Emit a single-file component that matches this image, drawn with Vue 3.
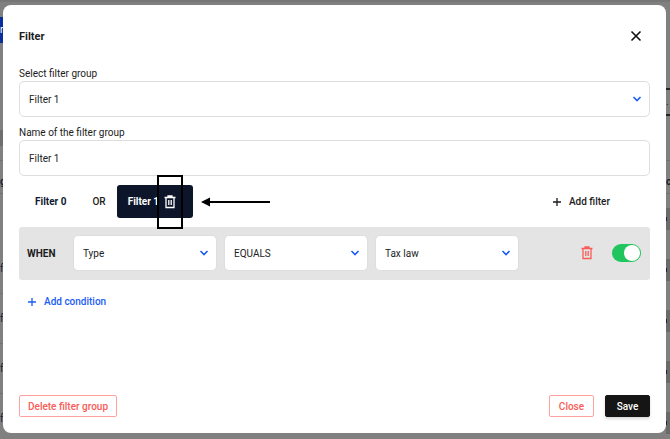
<script setup>

  import { ref, reactive } from "vue";

  const open = ref(true);
  const group = ref('Filter 1');
  const groupName = ref('Filter 1');
  const activeTab = ref(1);

  /* values of the condition row */
  const condition = reactive({
    field: 'Type',
    operator: 'EQUALS',
    value: 'Tax law',
    enabled: true
  });

  /* options for the three condition dropdowns */
  const selects = [
    {key: 'field', label: 'Field', options: ['Type', 'Name']},
    {key: 'operator', label: 'Operator', options: ['EQUALS', 'NOT EQUALS']},
    {key: 'value', label: 'Value', options: ['Tax law', 'Civil law']},
  ]

  /* text of the page that shows on the left of the dialog */
  const leftRows = ['f', 'f', 'f', 'f'];

  function closeDialog() {
    open.value = false;
  }
</script>

<template>
  <div class="screen">
    <div class="behind" aria-hidden="true">
      <div class="edge left">
        <span class="blue">r</span>
        <span class="grey-block"></span>
        <span class="head">g</span>
        <span class="cell" v-for="(row, i) in leftRows" :key="i">{{row}}</span>
      </div>
      <div class="edge right">
        <span class="outlined">.</span>
        <span class="head">c</span>
        <span class="cell" v-for="i in 5" :key="i"><b></b></span>
      </div>
    </div>

    <section v-if="open" class="dialog" role="dialog" aria-labelledby="dialogTitle">
      <header>
        <h2 id="dialogTitle">Filter</h2>
        <button class="close-icon" type="button" aria-label="Close dialog" @click="closeDialog">
          <svg width="12" height="12" viewBox="0 0 12 12"><path d="M1.5 1.5l9 9M10.5 1.5l-9 9" /></svg>
        </button>
      </header>

      <label class="field-label" for="filterGroup">Select filter group</label>
      <div class="select">
        <select id="filterGroup" v-model="group">
          <option>Filter 0</option>
          <option>Filter 1</option>
        </select>
        <svg class="chevron" width="10" height="6" viewBox="0 0 10 6"><path d="M1.5 1l3.5 3.5L8.5 1" /></svg>
      </div>

      <label class="field-label second" for="groupName">Name of the filter group</label>
      <input id="groupName" class="text" type="text" v-model="groupName" />

      <nav class="tabs">
        <button class="tab" type="button" @click="activeTab = 0">Filter 0</button>
        <span class="or">OR</span>
        <button class="tab active" type="button" @click="activeTab = 1">
          Filter 1
          <span class="marked">
            <svg class="trash" width="12" height="14" viewBox="0 0 12 14"><path d="M0.5 2.5h11M4 2V1h4v1M2 2.5v10h8v-10M4.8 5v5M7.2 5v5" /></svg>
          </span>
        </button>
        <svg class="arrow" width="69" height="10" viewBox="0 0 69 10"><path d="M8 5h61" stroke="#000" stroke-width="2" /><path d="M0 5l9-4.5v9z" /></svg>
        <button class="add add-filter" type="button">
          <svg width="10" height="10" viewBox="0 0 10 10"><path d="M5 1v8M1 5h8" /></svg>
          Add filter
        </button>
      </nav>

      <div class="condition">
        <span class="when">WHEN</span>
        <div class="select" v-for="item in selects" :key="item.key">
          <select :aria-label="item.label" v-model="condition[item.key]">
            <option v-for="option in item.options" :key="option">{{option}}</option>
          </select>
          <svg class="chevron" width="10" height="6" viewBox="0 0 10 6"><path d="M1.5 1l3.5 3.5L8.5 1" /></svg>
        </div>
        <button class="remove" type="button" aria-label="Remove condition">
          <svg class="trash" width="12" height="14" viewBox="0 0 12 14"><path d="M0.5 2.5h11M4 2V1h4v1M2 2.5v10h8v-10M4.8 5v5M7.2 5v5" /></svg>
        </button>
        <input class="toggle" type="checkbox" aria-label="Condition enabled" v-model="condition.enabled" />
      </div>

      <button class="add add-condition" type="button">
        <svg width="10" height="10" viewBox="0 0 10 10"><path d="M5 1v8M1 5h8" /></svg>
        Add condition
      </button>

      <footer>
        <button class="outline" type="button">Delete filter group</button>
        <button class="outline close" type="button" @click="closeDialog">Close</button>
        <button class="save" type="button">Save</button>
      </footer>
    </section>
  </div>
</template>

<style>
body {
  background: #808080;
}
</style>

<style scoped>

.screen {
  display: grid;
  min-height: 100vh;
  font-family: Roboto, "Liberation Sans", sans-serif;
  font-size: 10px;
  color: #1c1c1c;
  background: #808080;
}

.behind, .dialog {
  grid-area: 1 / 1;
  box-sizing: border-box;
}

/* page under the dialog */
.behind {
  display: flex;
  justify-content: space-between;
  border-top: 2px solid #767676;
  overflow: hidden;
}

.edge {
  display: flex;
  flex-direction: column;
  width: 4px;
  color: #1a2233;
}

.edge span {
  flex: none;
  box-sizing: border-box;
}

.left .blue {
  height: 26px;
  margin-top: 15px;
  line-height: 26px;
  background: #0a2f9c;
  color: #ffffff;
}

.left .grey-block {
  height: 16px;
  margin-top: 87px;
  background: #6e6e6e;
}

.edge .head {
  height: 34px;
  line-height: 42px;
  font-weight: 700;
  border-top: 1px solid #727272;
  border-bottom: 1px solid #727272;
}

.left .head {
  margin-top: 14px;
}

.left .cell {
  height: 50px;
  line-height: 50px;
  border-bottom: 1px solid #727272;
}

.left .head + .cell {
  margin-top: 50px;
}

.left .cell:last-child {
  height: 40px;
  border: 0;
}

.right .outlined {
  height: 28px;
  margin-top: 86px;
  line-height: 24px;
  border-top: 2px solid #222222;
  border-bottom: 2px solid #222222;
}

.right .head {
  margin-top: 44px;
}

.right .cell {
  display: flex;
  align-items: center;
  height: 22px;
  margin-top: 14px;
  margin-bottom: 15px;
  background: #6a6a6a;
}

.right .cell:last-child {
  margin-bottom: 0;
}

.right .cell b {
  width: 1px;
  height: 4px;
  background: #1a2233;
}

.dialog {
  display: flex;
  flex-direction: column;
  z-index: 1;
  margin: 5px 4px 6px 3px;
  padding: 16px;
  background: #ffffff;
  border-radius: 8px;
}

button {
  display: flex;
  align-items: center;
  justify-content: center;
  padding: 0;
  border: 0;
  background: none;
  font: inherit;
  font-weight: 500;
  color: inherit;
  cursor: pointer;
}

svg {
  display: block;
  flex: none;
}

header {
  display: flex;
  align-items: center;
  justify-content: space-between;
  height: 30px;
  margin-bottom: 14px;
}

h2 {
  margin: 0;
  font-size: 11px;
  font-weight: 700;
}

.close-icon {
  margin-right: 8px;
}

.close-icon path {
  stroke: #111111;
  stroke-width: 1.6;
}

.field-label {
  padding-top: 2px;
  line-height: 14px;
}

.field-label.second {
  margin-top: 7px;
}

/* arrow icon shares the grid cell of the native select */
.select {
  display: grid;
  align-items: center;
}

.select select, .text {
  box-sizing: border-box;
  width: 100%;
  height: 36px;
  padding: 0 9px;
  border: 1px solid #dedede;
  border-radius: 5px;
  background: #ffffff;
  font: inherit;
  color: #222222;
  appearance: none;
  outline: none;
}

.select select, .chevron {
  grid-area: 1 / 1;
}

.chevron {
  justify-self: end;
  margin-right: 8px;
  pointer-events: none;
}

.chevron path {
  fill: none;
  stroke: #1a5cf5;
  stroke-width: 1.6;
}

.tabs {
  display: flex;
  align-items: center;
  margin: 9px 0;
}

.tab {
  height: 33px;
  font-weight: 700;
  color: #101a30;
  padding-left: 16px;
}

.or {
  margin: 0 11px 0 26px;
  font-weight: 500;
}

.tab.active {
  gap: 5px;
  padding: 0 17px 0 11px;
  border-radius: 3px;
  background: #0c1529;
  color: #ffffff;
}

.trash path {
  fill: none;
  stroke: currentColor;
  stroke-width: 1.3;
}

/* frame drawn over the delete icon */
.marked {
  position: relative;
}

.marked::after {
  content: "";
  position: absolute;
  inset: -20px -7px;
  border: 2px solid #000000;
}

.arrow {
  margin-left: 8px;
}

.add {
  gap: 7px;
}

.add path {
  stroke: currentColor;
  stroke-width: 1.3;
}

.add-filter {
  margin-left: auto;
  margin-right: 40px;
}

.condition {
  display: flex;
  align-items: center;
  gap: 7px;
  padding: 8px 9px 9px 8px;
  border-radius: 3px;
  background: #e4e4e4;
}

.when {
  width: 39px;
  font-weight: 700;
}

.condition .select {
  flex: 0 1 144px;
}

.remove {
  margin-left: auto;
  margin-right: 12px;
  color: #f95c57;
}

.toggle {
  display: flex;
  align-items: center;
  box-sizing: border-box;
  width: 29px;
  height: 18px;
  margin: 0;
  padding: 0 1px;
  border-radius: 9px;
  background: #9a9a9a;
  appearance: none;
  cursor: pointer;
}

.toggle::before {
  content: "";
  width: 16px;
  height: 16px;
  border-radius: 50%;
  background: #ffffff;
}

.toggle:checked {
  justify-content: flex-end;
  background: #20c55e;
}

.add-condition {
  align-self: flex-start;
  margin: 16px 0 0 8px;
  color: #1a5cf5;
}

footer {
  display: flex;
  margin-top: auto;
}

.outline, .save {
  box-sizing: border-box;
  height: 22px;
  min-width: 45px;
  padding: 0 8px;
  border: 1px solid #ffa19f;
  border-radius: 2px;
  color: #f95c57;
}

.close {
  margin-left: auto;
  margin-right: 11px;
}

.save {
  border-color: #151515;
  background: #151515;
  color: #ffffff;
  box-shadow: 0 2px 3px rgba(0, 0, 0, 0.15);
}

</style>
